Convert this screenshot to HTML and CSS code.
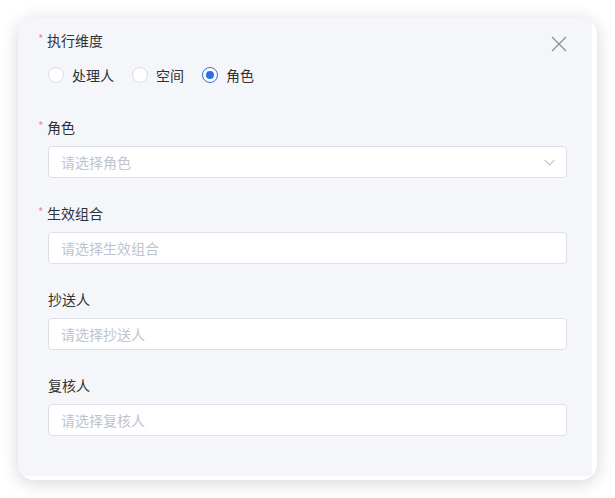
FILE: index.html
```html
<!DOCTYPE html>
<html lang="zh-CN">
<head>
<meta charset="utf-8">
<link rel="stylesheet" href="styles.css">
</head>
<body>
<div class="card">
  <div class="panel">
    <button class="close" aria-label="关闭">
      <svg width="16" height="16" viewBox="0 0 16 16"><path d="M1 1L15 15M15 1L1 15" stroke="#8e9097" stroke-width="1.3" fill="none"/></svg>
    </button>
    <form class="form">
      <div class="item">
        <div class="label required">执行维度</div>
        <div class="radios">
          <label class="radio"><span class="dot"></span>处理人</label>
          <label class="radio"><span class="dot"></span>空间</label>
          <label class="radio checked"><span class="dot"></span>角色</label>
        </div>
      </div>
      <div class="item">
        <div class="label required">角色</div>
        <div class="input select"><span class="ph">请选择角色</span>
          <svg width="11" height="7" viewBox="0 0 11 7"><path d="M0.5 0.8L5.5 6L10.5 0.8" stroke="#c0c4cc" stroke-width="1.1" fill="none"/></svg>
        </div>
      </div>
      <div class="item">
        <div class="label required">生效组合</div>
        <div class="input"><span class="ph">请选择生效组合</span></div>
      </div>
      <div class="item">
        <div class="label">抄送人</div>
        <div class="input"><span class="ph">请选择抄送人</span></div>
      </div>
      <div class="item">
        <div class="label">复核人</div>
        <div class="input"><span class="ph">请选择复核人</span></div>
      </div>
    </form>
  </div>
</div>
</body>
</html>
```
FILE: styles.css
```css
* { box-sizing: border-box; }
html, body { margin: 0; padding: 0; background: #fff; }
body {
  font-family: "PingFang SC", "Noto Sans CJK SC", "Noto Sans", sans-serif;
  font-size: 14px;
  color: #303133;
  padding: 18px;
}
.card {
  width: 579px;
  height: 462px;
  background: #fff;
  border-radius: 16px;
  overflow: hidden;
  padding: 0 5px 4px 0;
  box-shadow: 0 3px 18px rgba(0, 0, 0, 0.17);
}
.panel {
  position: relative;
  height: 100%;
  background: #f5f6fa;
  padding: 12px 25px 0 30px;
}
.close {
  position: absolute;
  top: 18px;
  right: 25px;
  width: 16px;
  height: 16px;
  padding: 0;
  border: 0;
  background: none;
  display: flex;
}
.form { display: flex; flex-direction: column; gap: 25px; }
.item { display: flex; flex-direction: column; gap: 9px; }
.label { line-height: 20px; height: 20px; }
.label.required::before {
  content: "*";
  color: #f78b8b;
  font-size: 12px;
  margin-left: -10px;
  margin-right: 3px;
  display: inline-block;
  width: 6px;
  vertical-align: top;
  line-height: 18px;
}
.radios { display: flex; align-items: center; height: 32px; margin-bottom: 1px; }
.radio { display: flex; align-items: center; margin-right: 18px; line-height: 20px; }
.dot {
  width: 16px; height: 16px;
  border: 1px solid #dcdfe6;
  border-radius: 50%;
  background: #fff;
  margin-right: 8px;
  position: relative;
}
.radio.checked .dot { border-color: #2b6fe3; }
.radio.checked .dot::after {
  content: "";
  position: absolute;
  left: 3px; top: 3px;
  width: 8px; height: 8px;
  border-radius: 50%;
  background: #2b6fe3;
}
.input {
  height: 32px;
  background: #fff;
  border: 1px solid #dcdfe6;
  border-radius: 4px;
  display: flex;
  align-items: center;
  justify-content: space-between;
  padding: 0 11px 0 12px;
}
.ph { color: #c0c4cc; }
```
